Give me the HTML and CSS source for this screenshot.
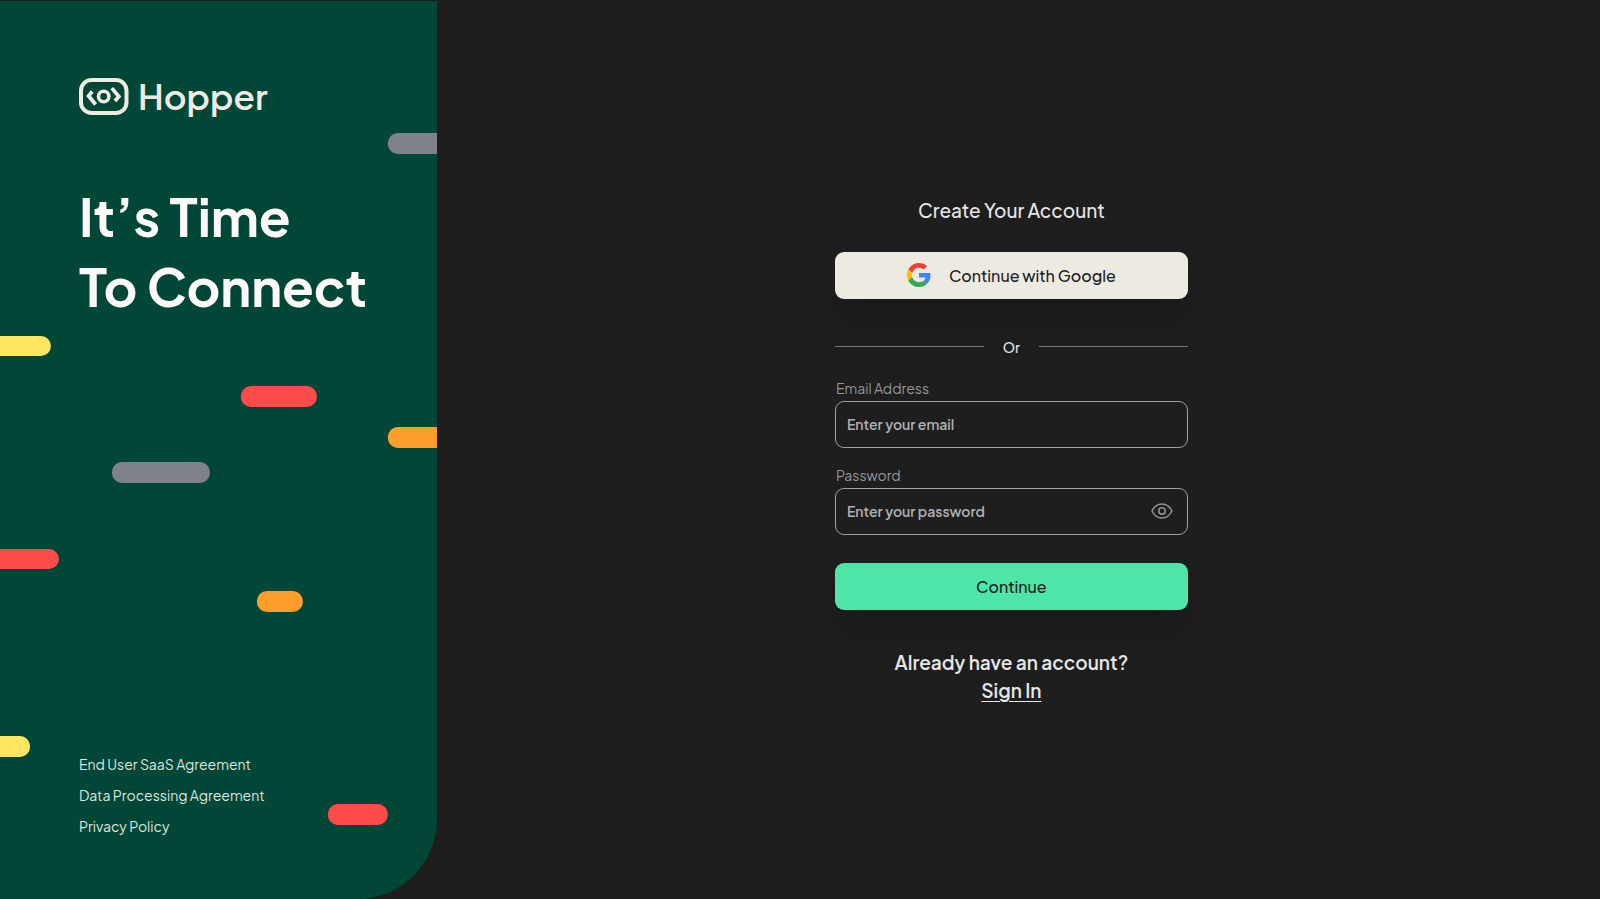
FILE: index.html
```html
<!DOCTYPE html>
<html lang="en">
<head>
  <meta charset="UTF-8">
  <meta name="viewport" content="width=device-width, initial-scale=1.0">
  <title>Hopper - Create Your Account</title>
  <link rel="stylesheet" href="styles.css">
</head>
<body>
  <div class="page">
    <aside class="panel">
      <svg class="pills" viewBox="0 1 437 898" preserveAspectRatio="none" aria-hidden="true">
        <rect x="388" y="133" width="80" height="21" rx="10" fill="#80828b"/>
        <rect x="-40" y="336" width="91" height="20" rx="10" fill="#ffe660"/>
        <rect x="241" y="386" width="76" height="21" rx="10" fill="#ff4b4a"/>
        <rect x="388" y="427" width="80" height="21" rx="10" fill="#ff9e2a"/>
        <rect x="112" y="462" width="98" height="21" rx="10" fill="#80828b"/>
        <rect x="-40" y="549" width="99" height="20" rx="10" fill="#ff4b4a"/>
        <rect x="257" y="591" width="46" height="21" rx="10" fill="#ff9e2a"/>
        <rect x="-40" y="736" width="70" height="21" rx="10" fill="#ffe660"/>
        <rect x="328" y="804" width="60" height="21" rx="10" fill="#ff4b4a"/>
      </svg>

      <a class="logo" href="#">
        <svg width="50" height="37" viewBox="0 0 50 37" fill="none" stroke="#eeebe3" aria-hidden="true">
          <rect x="2" y="2" width="45.500" height="33" rx="10.500" stroke-width="4"/>
          <circle cx="24.700" cy="18.500" r="5.200" stroke-width="3.600"/>
          <path d="M13.200 13.500L9.600 17.900L16.600 26.500M32.800 10.100L39.800 18.500L36 22.900" stroke-width="3.800"/>
        </svg>
        <span class="logo-name">Hopper</span>
      </a>

      <h1 class="headline">It’s Time<br>To Connect</h1>

      <nav class="legal">
        <a href="#">End User SaaS Agreement</a>
        <a href="#">Data Processing Agreement</a>
        <a href="#">Privacy Policy</a>
      </nav>
    </aside>

    <main class="content">
      <form class="signup">
        <h2 class="title">Create Your Account</h2>

        <button type="button" class="btn btn-google">
          <svg width="24" height="24" viewBox="0 0 48 48" aria-hidden="true">
            <path fill="#EA4335" d="M24 9.5c3.54 0 6.71 1.22 9.21 3.6l6.85-6.85C35.9 2.38 30.47 0 24 0 14.62 0 6.51 5.38 2.56 13.22l7.98 6.19C12.43 13.72 17.74 9.5 24 9.5z"/>
            <path fill="#4285F4" d="M46.98 24.55c0-1.57-.15-3.09-.38-4.55H24v9.02h12.94c-.58 2.96-2.26 5.48-4.78 7.18l7.73 6c4.51-4.18 7.09-10.36 7.09-17.65z"/>
            <path fill="#FBBC05" d="M10.53 28.59c-.48-1.45-.76-2.99-.76-4.59s.27-3.14.76-4.59l-7.98-6.19C.92 16.46 0 20.12 0 24c0 3.88.92 7.54 2.56 10.78l7.97-6.19z"/>
            <path fill="#34A853" d="M24 48c6.48 0 11.93-2.13 15.89-5.81l-7.73-6c-2.15 1.45-4.92 2.3-8.16 2.3-6.26 0-11.57-4.22-13.47-9.91l-7.98 6.19C6.51 42.62 14.62 48 24 48z"/>
          </svg>
          Continue with Google
        </button>

        <div class="divider">Or</div>

        <div class="field">
          <label for="email">Email Address</label>
          <input type="email" id="email" placeholder="Enter your email">
        </div>

        <div class="field">
          <label for="password">Password</label>
          <div class="password-box">
            <input type="password" id="password" placeholder="Enter your password">
            <button type="button" class="toggle" aria-label="Show password">
              <svg width="22" height="16" viewBox="0 0 22 16" fill="none" stroke="#96969c" stroke-width="1.5" aria-hidden="true">
                <path d="M1 8C3 4 6.500 1 11 1s8 3 10 7c-2 4-5.500 7-10 7S3 12 1 8z" stroke-linejoin="round"/>
                <circle cx="11" cy="8" r="3.200"/>
              </svg>
            </button>
          </div>
        </div>

        <button type="submit" class="btn btn-continue">Continue</button>

        <p class="signin">Already have an account?<br><a href="#">Sign In</a></p>
      </form>
    </main>
  </div>
</body>
</html>
```
FILE: styles.css
```css
* {
  box-sizing: border-box;
}
body {
  margin: 0;
  font-family: "Plus Jakarta Sans", Inter, sans-serif;
  background: #1e1e1e;
  color: #e6e6e6;
}
h1, h2, p {
  margin: 0;
}
.page {
  display: flex;
  min-height: 100vh;
}

/* left panel */
.panel {
  position: relative;
  display: flex;
  flex-direction: column;
  width: 27.3%;
  padding: 77px 0 63px 79px;
  margin-top: 1px;
  background: #004737;
  border-bottom-right-radius: 80px;
  overflow: hidden;
}
.pills {
  position: absolute;
  top: 0;
  left: 0;
  width: 100%;
  height: 100%;
}
.logo {
  position: relative;
  display: flex;
  align-items: center;
  gap: 9px;
  height: 36px;
  color: #eeebe3;
  text-decoration: none;
}
.logo-name {
  font-size: 35px;
  font-weight: 600;
  line-height: 36px;
}
.headline {
  position: relative;
  margin-top: 67px;
  font-size: 52px;
  font-weight: 700;
  line-height: 70px;
  color: #fcf9f8;
  white-space: nowrap;
}
.legal {
  position: relative;
  display: flex;
  flex-direction: column;
  gap: 11px;
  margin-top: auto;
}
.legal a {
  font-size: 14px;
  line-height: 20px;
  color: #dfe5df;
  text-decoration: none;
}

/* sign up form */
.content {
  flex: 1;
  display: flex;
  justify-content: center;
  align-items: center;
  padding: 2px 14px 0 0;
}
.signup {
  display: flex;
  flex-direction: column;
  width: 353px;
}
.title {
  margin-bottom: 30px;
  font-size: 19px;
  font-weight: 500;
  line-height: 24px;
  text-align: center;
}
.btn {
  display: flex;
  justify-content: center;
  align-items: center;
  gap: 18px;
  height: 47px;
  border: 0;
  border-radius: 9px;
  font-family: inherit;
  font-size: 16px;
  font-weight: 500;
  color: #1e1e1e;
  box-shadow: 0 20px 40px rgba(0, 0, 0, 0.15);
  cursor: pointer;
}
.btn-google {
  background: #edeae2;
}
.btn-continue {
  margin-top: 11px;
  background: #50e5a8;
}
.divider {
  display: flex;
  align-items: center;
  gap: 19px;
  margin: 38px 0 21px;
  font-size: 14px;
  font-weight: 500;
  line-height: 20px;
}
.divider::before,
.divider::after {
  content: "";
  flex: 1;
  height: 1px;
  background: #77777d;
}
.field {
  margin-bottom: 17px;
}
.field label {
  display: block;
  margin-bottom: 3px;
  padding-left: 1px;
  font-size: 14px;
  line-height: 20px;
  color: #96969c;
}
.field input {
  display: block;
  width: 100%;
  height: 47px;
  padding: 0 11px;
  border: 1px solid #a0a0a6;
  border-radius: 9px;
  background: transparent;
  font-family: inherit;
  font-size: 14px;
  font-weight: 600;
  color: #e6e6e6;
}
.field input::placeholder {
  color: #b0b0b4;
  opacity: 1;
}
.password-box {
  position: relative;
}
.toggle {
  position: absolute;
  top: 0;
  right: 15px;
  display: flex;
  align-items: center;
  height: 47px;
  padding: 0;
  border: 0;
  background: none;
  cursor: pointer;
}
.signin {
  margin-top: 38px;
  font-size: 19px;
  font-weight: 600;
  line-height: 28px;
  text-align: center;
}
.signin a {
  color: inherit;
  text-underline-offset: 3px;
  text-decoration-thickness: 1px;
}
```
